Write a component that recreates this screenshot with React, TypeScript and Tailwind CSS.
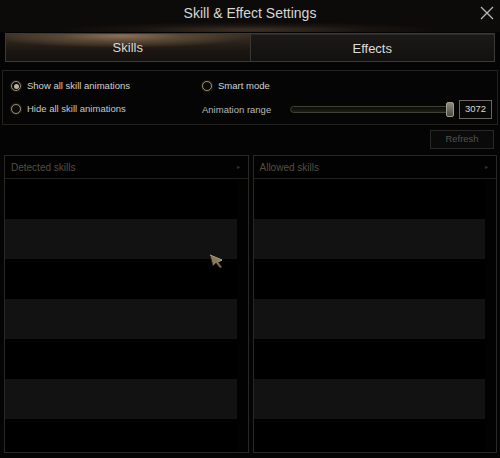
import React from "react";

function Radio({ checked }: { checked?: boolean }) {
  return (
    <span className="relative flex h-[10px] w-[10px] shrink-0 items-center justify-center rounded-full border border-[#9a8a6c] bg-[#0b0a08] shadow-[0_0_2px_#6a5c44]">
      {checked && <span className="h-[5px] w-[5px] rounded-full bg-[#b9b2a4]" />}
    </span>
  );
}

function Panel({ title }: { title: string }) {
  const rows = [0, 1, 2, 3, 4, 5, 6];
  return (
    <div className="flex h-[298px] flex-1 flex-col overflow-hidden border border-[#2a2724] bg-[#020202]">
      <div className="flex h-[23px] shrink-0 items-center justify-between border-b border-[#22201d] pl-[6px] pr-[8px]">
        <span className="text-[10px] text-[#574e3d]">{title}</span>
        <span className="text-[6px] text-[#3a352c]">▸</span>
      </div>
      <div className="flex flex-col">
        {rows.map((i) => (
          <div
            key={i}
            className={
              i % 2 === 1
                ? "mr-[11px] h-[40px] shrink-0 bg-[#121212]"
                : "mr-[11px] h-[40px] shrink-0 bg-[#000000]"
            }
          />
        ))}
      </div>
    </div>
  );
}

export default function App() {
  return (
    <div
      className="relative h-[458px] w-[500px] overflow-hidden bg-[#040404] text-[#cfcfcf]"
      style={{ fontFamily: '"Liberation Sans", Arial, sans-serif' }}
    >
      {/* Title bar */}
      <div className="relative flex h-[32px] items-start justify-center pt-[4px] bg-[radial-gradient(ellipse_190px_8px_at_250px_30px,#3d3125_0%,#1a1410_60%,#0d0b09_100%)]">
        <span className="text-[14px] leading-[18px] text-[#d6d6d6]">Skill &amp; Effect Settings</span>
        <svg
          className="absolute right-[6px] top-[6px]"
          width="14"
          height="14"
          viewBox="0 0 14 14"
        >
          <path d="M1 1 L13 13 M13 1 L1 13" stroke="#b8b8b8" strokeWidth="1.3" />
        </svg>
      </div>

      {/* Tabs */}
      <div className="mx-[5px] mt-[1px] flex h-[29px] border border-[#3d3934] bg-[#131110]">
        <div className="flex flex-1 items-center justify-center border-r border-[#3a3631] bg-[radial-gradient(ellipse_130px_12px_at_115px_2px,#8a7158_0%,#5a4836_45%,transparent_100%),linear-gradient(#3a2f25,#1c1712_60%,#15110e)] pt-[1px] text-[13px] text-[#d9d9d9]">
          Skills
        </div>
        <div className="flex flex-1 items-center justify-center border-t border-[#2c2a27] bg-[linear-gradient(#1b1917,#121110)] pt-[1px] text-[13px] text-[#dcdcdc]">
          Effects
        </div>
      </div>

      {/* Options box */}
      <div className="mx-[2px] mt-[8px] flex h-[55px] border border-[#24221f] bg-[#050505] pl-[8px] pt-[8px] text-[9.5px]">
        <div className="flex w-[191px] flex-col gap-[7px]">
          <div className="flex h-[14px] items-center gap-[6px] text-[#d2d2d2]">
            <Radio checked />
            <span>Show all skill animations</span>
          </div>
          <div className="flex h-[18px] items-center gap-[6px] text-[#c8c8c8]">
            <Radio />
            <span>Hide all skill animations</span>
          </div>
        </div>
        <div className="flex flex-1 flex-col gap-[7px]">
          <div className="flex h-[14px] items-center gap-[6px] text-[#d2d2d2]">
            <Radio />
            <span>Smart mode</span>
          </div>
          <div className="flex h-[18px] items-center text-[#b8b8b8]">
            <span className="mt-[3px] w-[88px]">Animation range</span>
            <div className="relative flex h-[7px] w-[163px] items-center rounded-[4px] border border-[#3e4336] bg-[linear-gradient(#0a0a08,#1e2018)]">
              <div className="absolute right-[-2px] top-[-5px] h-[15px] w-[8px] rounded-[2px] border border-[#a19e8e] bg-[linear-gradient(#8d8a7c,#4c4a40)]" />
            </div>
            <div className="ml-[6px] flex h-[19px] w-[33px] items-center justify-center border border-[#6a6660] bg-[#080808] text-[9.5px] text-[#d8d8d8]">
              3072
            </div>
          </div>
        </div>
      </div>

      {/* Refresh */}
      <div className="mt-[5px] flex justify-end pr-[6px]">
        <div className="flex h-[19px] w-[64px] items-center justify-center border border-[#2a2826] bg-[#0a0a0a] text-[9.4px] text-[#555250]">
          Refresh
        </div>
      </div>

      {/* Panels */}
      <div className="mt-[6px] flex gap-[4px] px-[4px] pr-[3px]">
        <Panel title="Detected skills" />
        <Panel title="Allowed skills" />
      </div>

      {/* Mouse cursor overlay */}
      <svg className="absolute left-[209px] top-[254px]" width="16" height="16" viewBox="0 0 16 16">
        <path d="M1 1 L13 6 L9 8 L13 13 L11 14 L7 9 L4 12 Z" fill="#8c7a5a" stroke="#2a2418" strokeWidth="0.8" />
        <path d="M1 1 L13 6 L9 8" fill="none" stroke="#d8c9a6" strokeWidth="0.8" />
      </svg>
    </div>
  );
}
